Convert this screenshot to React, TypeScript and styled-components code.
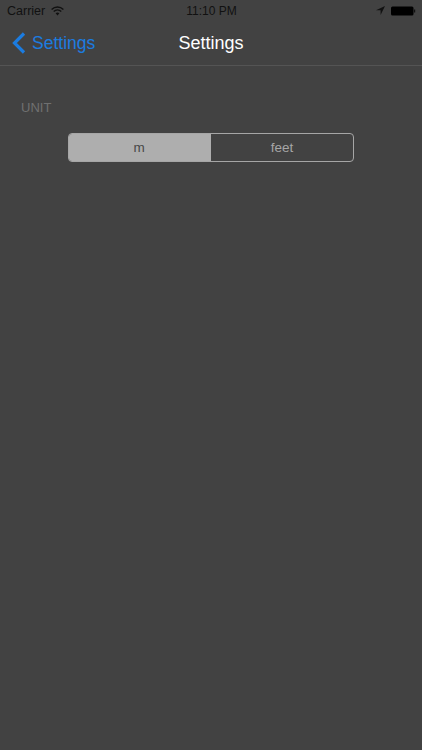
import React, { useState } from "react";
import styled, { createGlobalStyle } from "styled-components";

const GlobalStyle = createGlobalStyle`
  html, body {
    margin: 0;
    padding: 0;
    background-color: #424242;
    font-family: "Liberation Sans", Arial, sans-serif;
  }
`;

const Screen = styled.div`
  width: 422px;
  height: 750px;
  background-color: #424242;
  overflow: hidden;
`;

const Header = styled.div`
  height: 65px;
  border-bottom: 1px solid #545454;
`;

const StatusBar = styled.div`
  height: 21px;
  padding: 0 6px 0 7px;
  display: grid;
  grid-template-columns: 1fr auto 1fr;
  align-items: center;
  font-size: 12.5px;
  color: #111;
`;

const StatusLeft = styled.div`
  display: flex;
  align-items: center;
  gap: 6px;
`;

const StatusRight = styled.div`
  display: flex;
  align-items: center;
  justify-content: flex-end;
  gap: 6px;
`;

const Clock = styled.span`
  font-size: 12px;
`;

const NavBar = styled.div`
  height: 44px;
  display: grid;
  grid-template-columns: 1fr auto 1fr;
  align-items: center;
`;

const BackLink = styled.div`
  display: flex;
  align-items: center;
  gap: 6px;
  padding-left: 12px;
  color: #1c7ce0;
  font-size: 17.5px;
`;

const Title = styled.div`
  color: #fff;
  font-size: 18px;
`;

const Content = styled.div`
  padding: 34px 68px 0 21px;
`;

const SectionLabel = styled.div`
  color: #707070;
  font-size: 13px;
  line-height: 15px;
`;

const Segments = styled.div`
  box-sizing: border-box;
  margin: 18px 0 0 47px;
  height: 29px;
  display: grid;
  grid-template-columns: 1fr 1fr;
  border: 1px solid #a6a6a6;
  border-radius: 4px;
  overflow: hidden;
`;

const Segment = styled.button<{ $active: boolean }>`
  border: 0;
  padding: 0 ${(props) => (props.$active ? "2px" : "0")} 0 0;
  font-family: inherit;
  font-size: 13.5px;
  color: ${(props) => (props.$active ? "#484848" : "#a6a6a6")};
  background-color: ${(props) => (props.$active ? "#aeaeae" : "transparent")};
`;

const units = ["m", "feet"];

export default function App() {
  const [unit, setUnit] = useState("m");

  return (
    <Screen>
      <GlobalStyle />
      <Header>
        <StatusBar>
          <StatusLeft>
            Carrier
            <svg width="13" height="10" viewBox="0 0 13 10">
              <path d="M0.6 3.4C4 0.2 9 0.2 12.4 3.4" fill="none" stroke="#111" strokeWidth="1.4" />
              <path d="M2.7 5.4C4.9 3.4 8.1 3.4 10.3 5.4" fill="none" stroke="#111" strokeWidth="1.4" />
              <path d="M4.6 7.2C5.8 6.2 7.2 6.2 8.4 7.2L6.5 9.4Z" fill="#111" />
            </svg>
          </StatusLeft>
          <Clock>11:10 PM</Clock>
          <StatusRight>
            <svg width="9" height="9" viewBox="0 0 9 9">
              <path d="M9 0L0 4.2H4.6V9Z" fill="#111" />
            </svg>
            <svg width="25" height="10" viewBox="0 0 25 10">
              <rect x="0" y="0.5" width="22.5" height="9" rx="1.5" fill="#000" />
              <rect x="23" y="3.5" width="1.2" height="3" fill="#111" />
            </svg>
          </StatusRight>
        </StatusBar>
        <NavBar>
          <BackLink>
            <svg width="14" height="22" viewBox="0 0 14 22">
              <path d="M12 1.5L2.5 11L12 20.5" fill="none" stroke="#1c7ce0" strokeWidth="3.2" />
            </svg>
            Settings
          </BackLink>
          <Title>Settings</Title>
        </NavBar>
      </Header>
      <Content>
        <SectionLabel>UNIT</SectionLabel>
        <Segments>
          {units.map((item) => (
            <Segment key={item} $active={item === unit} onClick={() => setUnit(item)}>
              {item}
            </Segment>
          ))}
        </Segments>
      </Content>
    </Screen>
  );
}
